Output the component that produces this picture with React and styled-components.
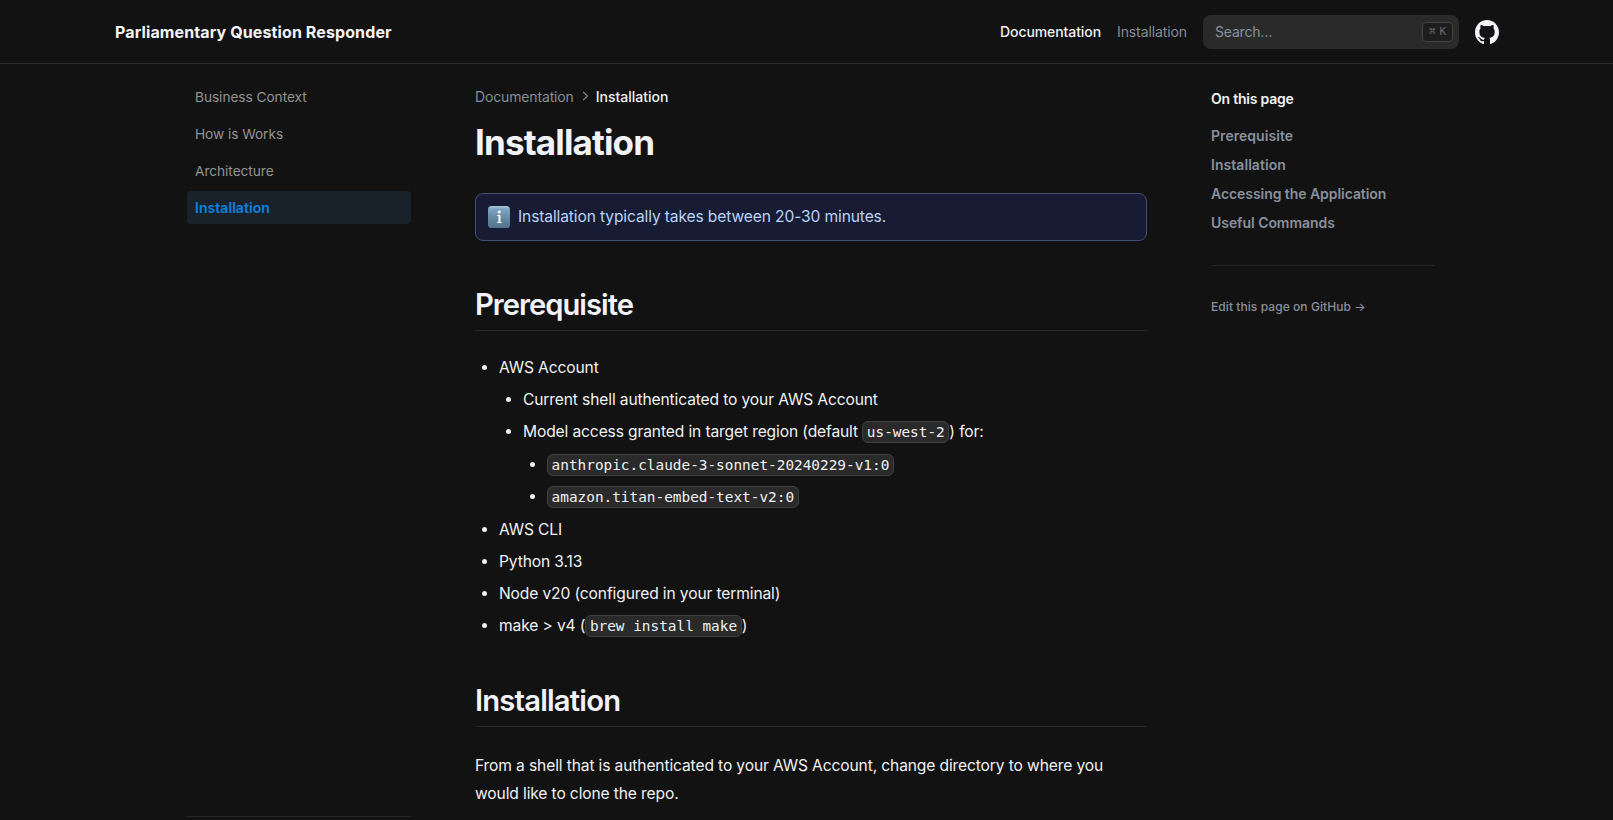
import React from 'react';
import styled, { createGlobalStyle } from 'styled-components';

const GlobalStyle = createGlobalStyle`
  *, *::before, *::after { box-sizing: border-box; }
  body {
    margin: 0;
    background: #121212;
    color: #f1f1f3;
    font-family: Inter, "Liberation Sans", sans-serif;
    overflow: hidden;
    -webkit-font-smoothing: antialiased;
  }
  a { color: inherit; text-decoration: none; }
`;

const muted = '#868c99';

const Page = styled.div`
  height: 820px;
  overflow: hidden;
  display: flex;
  flex-direction: column;
`;

const Header = styled.header`
  height: 64px;
  flex: none;
  display: flex;
  align-items: center;
  padding: 0 114px 0 115px;
  border-bottom: 1px solid #2a2a2a;
`;

const Brand = styled.a`
  margin-right: auto;
  font-size: 16px;
  font-weight: 700;
  line-height: 24px;
  letter-spacing: 0.11px;
  color: #f4f4f7;
`;

const NavLink = styled.a`
  margin-right: 16px;
  font-size: 14px;
  line-height: 22px;
  font-weight: ${(p) => (p.$active ? 500 : 400)};
  letter-spacing: ${(p) => (p.$active ? '-0.09px' : '-0.1px')};
  color: ${(p) => (p.$active ? '#f1f1f3' : muted)};
`;

const Search = styled.div`
  width: 256px;
  height: 34px;
  display: flex;
  align-items: center;
  justify-content: space-between;
  padding: 0 6px 0 12px;
  border-radius: 8px;
  background: #2a2a2a;
  color: #8a909c;
  font-size: 14px;
  letter-spacing: -0.2px;
`;

const Kbd = styled.kbd`
  width: 31px;
  height: 20px;
  display: flex;
  align-items: center;
  justify-content: center;
  gap: 4px;
  border: 1px solid #454545;
  border-radius: 4px;
  background: #1d1d1d;
  color: #666b76;
  font-family: "DejaVu Sans Mono", monospace;
  font-size: 11px;
  letter-spacing: 0;
  line-height: 1;
`;

const GithubLink = styled.a`
  display: flex;
  margin-left: 16px;
  color: #f1f3f8;
`;

const Body = styled.div`
  flex: 1;
  min-height: 0;
  display: flex;
  width: 1280px;
  margin-left: 171px;
`;

const Sidebar = styled.aside`
  width: 256px;
  padding: 16px 16px 0;
  display: flex;
  flex-direction: column;
`;

const SideList = styled.nav`
  flex: 1;
  display: flex;
  flex-direction: column;
  gap: 4px;
`;

const SideItem = styled.a`
  height: 33px;
  padding: 0 8px;
  border-radius: 4px;
  line-height: ${(p) => (p.$active ? '33px' : '35px')};
  font-size: ${(p) => (p.$active ? '14px' : '13.7px')};
  font-weight: ${(p) => (p.$active ? 600 : 400)};
  letter-spacing: ${(p) => (p.$active ? '0.05px' : '-0.05px')};
  color: ${(p) => (p.$active ? '#0b82e0' : '#929292')};
  background: ${(p) => (p.$active ? '#19222a' : 'transparent')};
`;

const SideFooter = styled.div`
  height: 4px;
  border-top: 1px solid #272727;
`;

const Article = styled.main`
  width: 768px;
  padding: 22px 48px 0;
`;

const Crumbs = styled.div`
  display: flex;
  align-items: center;
  height: 20px;
  font-size: 14px;
  color: ${muted};
  letter-spacing: -0.15px;

  svg { margin: 0 4px 0 4px; }
  strong { font-weight: 500; color: #f1f1f3; letter-spacing: 0; }
`;

const Title = styled.h1`
  margin: 16px 0 0;
  font-size: 35px;
  font-weight: 700;
  line-height: 40px;
  letter-spacing: -0.85px;
  color: #f1f3f8;
`;

const Callout = styled.div`
  height: 48px;
  margin-top: 31px;
  padding: 0 12px;
  display: flex;
  align-items: center;
  gap: 8px;
  border: 1px solid #434e75;
  border-radius: 8px;
  background: #171b33;
  color: #b9d4f8;
  font-size: 15.6px;
  line-height: 28px;
  letter-spacing: -0.13px;
  span { margin-top: -1px; }
`;

const Heading = styled.h2`
  margin: ${(p) => p.$top}px 0 0;
  height: 45px;
  padding-top: 1px;
  border-bottom: 1px solid #272727;
  font-size: 29.2px;
  font-weight: 600;
  line-height: 36px;
  letter-spacing: ${(p) => p.$track}px;
  color: #f1f3f8;
`;

const List = styled.ul`
  margin: ${(p) => p.$top || 0}px 0 ${(p) => p.$bottom || 0}px;
  padding: 0 0 0 24px;
  list-style: disc;
  font-size: 15.6px;
  line-height: 28px;
  letter-spacing: -0.13px;
`;

const Item = styled.li`
  margin: 0 0 4px;
`;

const Line = styled.div`
  height: 28px;
  white-space: nowrap;
`;

const Code = styled.code`
  display: inline-block;
  height: 22px;
  padding: 0 3.6px;
  border: 1px solid #414141;
  border-radius: 6px;
  background: #2a2a2a;
  font-family: "DejaVu Sans Mono", monospace;
  font-size: 14.4px;
  line-height: 21px;
  letter-spacing: -0.005px;
`;

const Paragraph = styled.p`
  margin: 25px 0 0;
  padding-right: 24px;
  font-size: 15.6px;
  line-height: 28px;
  letter-spacing: -0.13px;
`;

const Toc = styled.aside`
  width: 256px;
  padding: 25px 16px 0;
  font-size: 14px;
  color: #8a909c;
`;

const TocTitle = styled.div`
  font-weight: 600;
  line-height: 20px;
  letter-spacing: -0.22px;
  color: #f1f1f3;
  margin-bottom: 17px;
`;

const TocLink = styled.a`
  display: block;
  height: 20px;
  margin-bottom: 9px;
  line-height: 20px;
  font-weight: 600;
  letter-spacing: ${(p) => p.$track}px;
`;

const TocFooter = styled.div`
  margin-top: 32px;
  padding-top: 33px;
  border-top: 1px solid #252525;
  font-size: 12px;
  font-weight: 500;
  line-height: 16px;
  letter-spacing: 0.07px;
`;

const Github = () => (
  <svg width="24" height="24" viewBox="3 3 18 18" fill="currentColor">
    <path d="M12 3C7.0275 3 3 7.12937 3 12.2276C3 16.3109 5.57625 19.7597 9.15374 20.9824C9.60374 21.0631 9.77249 20.7863 9.77249 20.5441C9.77249 20.3249 9.76125 19.5982 9.76125 18.8254C7.5 19.2522 6.915 18.2602 6.735 17.7412C6.63375 17.4759 6.19499 16.6569 5.8125 16.4378C5.4975 16.2647 5.0475 15.838 5.80124 15.8264C6.51 15.8149 7.01625 16.4954 7.18499 16.7723C7.99499 18.1679 9.28875 17.7758 9.80625 17.5335C9.885 16.9337 10.1212 16.53 10.38 16.2993C8.3775 16.0687 6.285 15.2728 6.285 11.7432C6.285 10.7397 6.63375 9.9092 7.20749 9.26326C7.1175 9.03257 6.8025 8.08674 7.2975 6.81794C7.2975 6.81794 8.05125 6.57571 9.77249 7.76377C10.4925 7.55615 11.2575 7.45234 12.0225 7.45234C12.7875 7.45234 13.5525 7.55615 14.2725 7.76377C15.9937 6.56418 16.7475 6.81794 16.7475 6.81794C17.2424 8.08674 16.9275 9.03257 16.8375 9.26326C17.4113 9.9092 17.76 10.7281 17.76 11.7432C17.76 15.2843 15.6563 16.0687 13.6537 16.2993C13.98 16.5877 14.2613 17.1414 14.2613 18.0065C14.2613 19.2407 14.25 20.2326 14.25 20.5441C14.25 20.7863 14.4188 21.0746 14.8688 20.9824C16.6554 20.364 18.2079 19.1866 19.3078 17.6162C20.4077 16.0457 20.9995 14.1611 21 12.2276C21 7.12937 16.9725 3 12 3Z" />
  </svg>
);

const Chevron = () => (
  <svg width="14" height="14" viewBox="0 0 14 14" fill="none" stroke="currentColor" strokeWidth="1.1" strokeLinecap="round" strokeLinejoin="round">
    <path d="M5.4 3.2 9.4 7 5.4 10.8" />
  </svg>
);

const InfoIcon = () => (
  <svg width="22" height="22" viewBox="0 0 22 22">
    <defs>
      <linearGradient id="info-face" x1="0" y1="0" x2="0" y2="1">
        <stop offset="0" stopColor="#a9c6da" />
        <stop offset="0.14" stopColor="#7fa5c4" />
        <stop offset="0.6" stopColor="#64869f" />
        <stop offset="1" stopColor="#54728b" />
      </linearGradient>
    </defs>
    <rect width="22" height="22" rx="3.6" fill="url(#info-face)" />
    <circle cx="11.2" cy="6" r="1.5" fill="#fff" />
    <path d="M9.2 9h3.2v7h1.2v1.1H9v-1.1h1.5v-5.9H9.2z" fill="#fff" />
  </svg>
);

const sideItems = ['Business Context', 'How is Works', 'Architecture', 'Installation'];
const tocItems = [
  ['Prerequisite', 0.05],
  ['Installation', 0.05],
  ['Accessing the Application', -0.06],
  ['Useful Commands', -0.05],
];

export default function App() {
  return (
    <Page>
      <GlobalStyle />
      <Header>
        <Brand>Parliamentary Question Responder</Brand>
        <NavLink $active>Documentation</NavLink>
        <NavLink>Installation</NavLink>
        <Search>
          Search…
          <Kbd><span>⌘</span><span>K</span></Kbd>
        </Search>
        <GithubLink><Github /></GithubLink>
      </Header>
      <Body>
        <Sidebar>
          <SideList>
            {sideItems.map((t) => (
              <SideItem key={t} $active={t === 'Installation'}>{t}</SideItem>
            ))}
          </SideList>
          <SideFooter />
        </Sidebar>
        <Article>
          <Crumbs>Documentation<Chevron /><strong>Installation</strong></Crumbs>
          <Title>Installation</Title>
          <Callout>
            <InfoIcon />
            <span>Installation typically takes between 20-30 minutes.</span>
          </Callout>
          <Heading $top={45} $track={-1}>Prerequisite</Heading>
          <List $top={23}>
            <Item>
              <Line>AWS Account</Line>
              <List $top={4}>
                <Item><Line>Current shell authenticated to your AWS Account</Line></Item>
                <Item>
                  <Line>Model access granted in target region (default <Code>us-west-2</Code>) for:</Line>
                  <List $top={5} $bottom={5}>
                    <Item><Line><Code>anthropic.claude-3-sonnet-20240229-v1:0</Code></Line></Item>
                    <Item><Line><Code>amazon.titan-embed-text-v2:0</Code></Line></Item>
                  </List>
                </Item>
              </List>
            </Item>
            <Item><Line>AWS CLI</Line></Item>
            <Item><Line>Python 3.13</Line></Item>
            <Item><Line>Node v20 (configured in your terminal)</Line></Item>
            <Item><Line>make &gt; v4 (<Code>brew install make</Code>)</Line></Item>
          </List>
          <Heading $top={42} $track={-0.8}>Installation</Heading>
          <Paragraph>
            From a shell that is authenticated to your AWS Account, change directory to where you would like to clone the repo.
          </Paragraph>
        </Article>
        <Toc>
          <TocTitle>On this page</TocTitle>
          {tocItems.map(([t, track]) => (
            <TocLink key={t} $track={track}>{t}</TocLink>
          ))}
          <TocFooter>Edit this page on GitHub →</TocFooter>
        </Toc>
      </Body>
    </Page>
  );
}
